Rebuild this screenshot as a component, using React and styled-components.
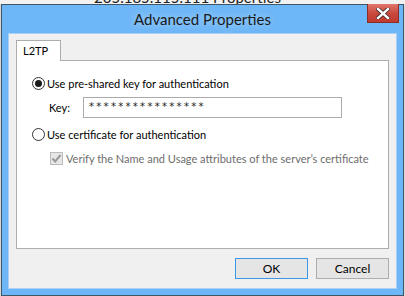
import React from "react";
import styled, { createGlobalStyle } from "styled-components";

const Global = createGlobalStyle`
  html, body { margin: 0; padding: 0; }
  body {
    width: 405px;
    height: 296px;
    overflow: hidden;
    background: #d9d9d9;
    font-family: Lato, "Noto Sans", sans-serif;
  }
`;

const App = () => {
  return (
    <>
      <Global />
      <Screen>
        <BehindBar>
          <BehindTitle>205.185.115.111 Properties</BehindTitle>
        </BehindBar>
        <Window>
          <TitleBar>
            <Title>Advanced Properties</Title>
            <CloseButton>
              <svg width="14" height="11" viewBox="0 0 14 11">
                <path
                  d="M2 1 L12 10 M12 1 L2 10"
                  stroke="#3a2b2b"
                  strokeWidth="4"
                  strokeLinecap="square"
                />
                <path
                  d="M2 1 L12 10 M12 1 L2 10"
                  stroke="#ffffff"
                  strokeWidth="2.4"
                  strokeLinecap="square"
                />
              </svg>
            </CloseButton>
          </TitleBar>
          <Client>
            <Tabs>
              <Tab>L2TP</Tab>
            </Tabs>
            <Panel>
              <OptionRow>
                <Radio checked />
                <Label>Use pre-shared key for authentication</Label>
              </OptionRow>
              <KeyRow>
                <KeyLabel>Key:</KeyLabel>
                <KeyInput>****************</KeyInput>
              </KeyRow>
              <OptionRow>
                <Radio />
                <Label>Use certificate for authentication</Label>
              </OptionRow>
              <CheckRow>
                <CheckBox>
                  <svg width="11" height="11" viewBox="0 0 11 11">
                    <path
                      d="M1.5 5.5 L4.2 8.5 L9.5 2"
                      stroke="#9a9a9a"
                      strokeWidth="2"
                      fill="none"
                    />
                  </svg>
                </CheckBox>
                <Label disabled>
                  Verify the Name and Usage attributes of the server’s certificate
                </Label>
              </CheckRow>
            </Panel>
            <Buttons>
              <Button primary>OK</Button>
              <Button>Cancel</Button>
            </Buttons>
          </Client>
        </Window>
      </Screen>
    </>
  );
};

export default App;

const Screen = styled.div`
  width: 405px;
  height: 296px;
  display: flex;
  flex-direction: column;
`;

const BehindBar = styled.div`
  height: 4px;
  overflow: hidden;
  background: #f2f2f2;
  display: flex;
  justify-content: center;
`;

const BehindTitle = styled.div`
  font-family: Lato, sans-serif;
  font-size: 15px;
  line-height: 15px;
  color: #222;
  margin-top: -10px;
  margin-left: -30px;
`;

const Window = styled.div`
  margin-left: 1px;
  width: 401px;
  height: 290px;
  border: 1px solid #3f5568;
  background: #6db6f7;
  display: flex;
  flex-direction: column;
`;

const TitleBar = styled.div`
  height: 28px;
  display: flex;
  align-items: flex-start;
  justify-content: center;
  position: relative;
`;

const Title = styled.div`
  font-family: Lato, "Noto Sans", sans-serif;
  font-size: 15px;
  line-height: 28px;
  color: #1a1a1a;
  text-shadow: 0 0 8px rgba(255, 255, 255, 0.6);
`;

const CloseButton = styled.div`
  position: absolute;
  top: -1px;
  right: 4px;
  width: 32px;
  height: 19px;
  box-sizing: border-box;
  border: 1px solid #8a2d25;
  border-top: 0;
  background: linear-gradient(#e0766a, #c9463a 55%, #c13b2f);
  display: flex;
  align-items: center;
  justify-content: center;
`;

const Client = styled.div`
  flex: 1;
  margin: 0 6px 6px 6px;
  background: #f0f0f0;
  border: 1px solid #a9cff2;
  display: flex;
  flex-direction: column;
  padding: 6px 7px 0 7px;
`;

const Tabs = styled.div`
  display: flex;
  height: 20px;
  position: relative;
  z-index: 1;
`;

const Tab = styled.div`
  width: 45px;
  height: 21px;
  box-sizing: border-box;
  border: 1px solid #adadad;
  border-bottom: 0;
  background: #ffffff;
  font-size: 11px;
  color: #000;
  padding: 3px 0 0 6px;
`;

const Panel = styled.div`
  height: 189px;
  box-sizing: border-box;
  border: 1px solid #adadad;
  background: #ffffff;
  padding: 14px 0 0 15px;
  display: flex;
  flex-direction: column;
`;

const OptionRow = styled.div`
  display: flex;
  align-items: center;
  height: 16px;
  gap: 2px;
`;

const Radio = styled.span`
  width: 13px;
  height: 13px;
  box-sizing: border-box;
  border-radius: 50%;
  border: 1px solid #333;
  background: #fff;
  position: relative;
  ${(p) =>
    p.checked &&
    `
    &::after {
      content: "";
      position: absolute;
      left: 2px;
      top: 2px;
      width: 7px;
      height: 7px;
      border-radius: 50%;
      background: #1a1a1a;
    }
  `}
`;

const Label = styled.span`
  font-size: 11px;
  color: ${(p) => (p.disabled ? "#6d6d6d" : "#000")};
  white-space: nowrap;
`;

const KeyRow = styled.div`
  display: flex;
  align-items: center;
  margin: 6px 0 8px 17px;
  height: 21px;
`;

const KeyLabel = styled.span`
  font-size: 11px;
  color: #000;
  width: 34px;
`;

const KeyInput = styled.div`
  width: 259px;
  height: 21px;
  box-sizing: border-box;
  border: 1px solid #ababab;
  background: #fff;
  font-family: "DejaVu Sans", sans-serif;
  font-size: 10px;
  letter-spacing: 2.3px;
  padding: 3px 0 0 5px;
  color: #222;
`;

const CheckRow = styled.div`
  display: flex;
  align-items: center;
  margin: 10px 0 0 18px;
  gap: 3px;
`;

const CheckBox = styled.span`
  width: 13px;
  height: 13px;
  box-sizing: border-box;
  border: 1px solid #bcbcbc;
  background: #e6e6e6;
  display: flex;
  align-items: center;
  justify-content: center;
`;

const Buttons = styled.div`
  display: flex;
  justify-content: flex-end;
  gap: 8px;
  margin-top: 9px;
`;

const Button = styled.button`
  width: 73px;
  height: 21px;
  box-sizing: border-box;
  border: 1px solid ${(p) => (p.primary ? "#3d96e6" : "#adadad")};
  background: #e5e5e5;
  font-family: Lato, "Noto Sans", sans-serif;
  font-size: 12px;
  color: #000;
  padding: 0;
`;
